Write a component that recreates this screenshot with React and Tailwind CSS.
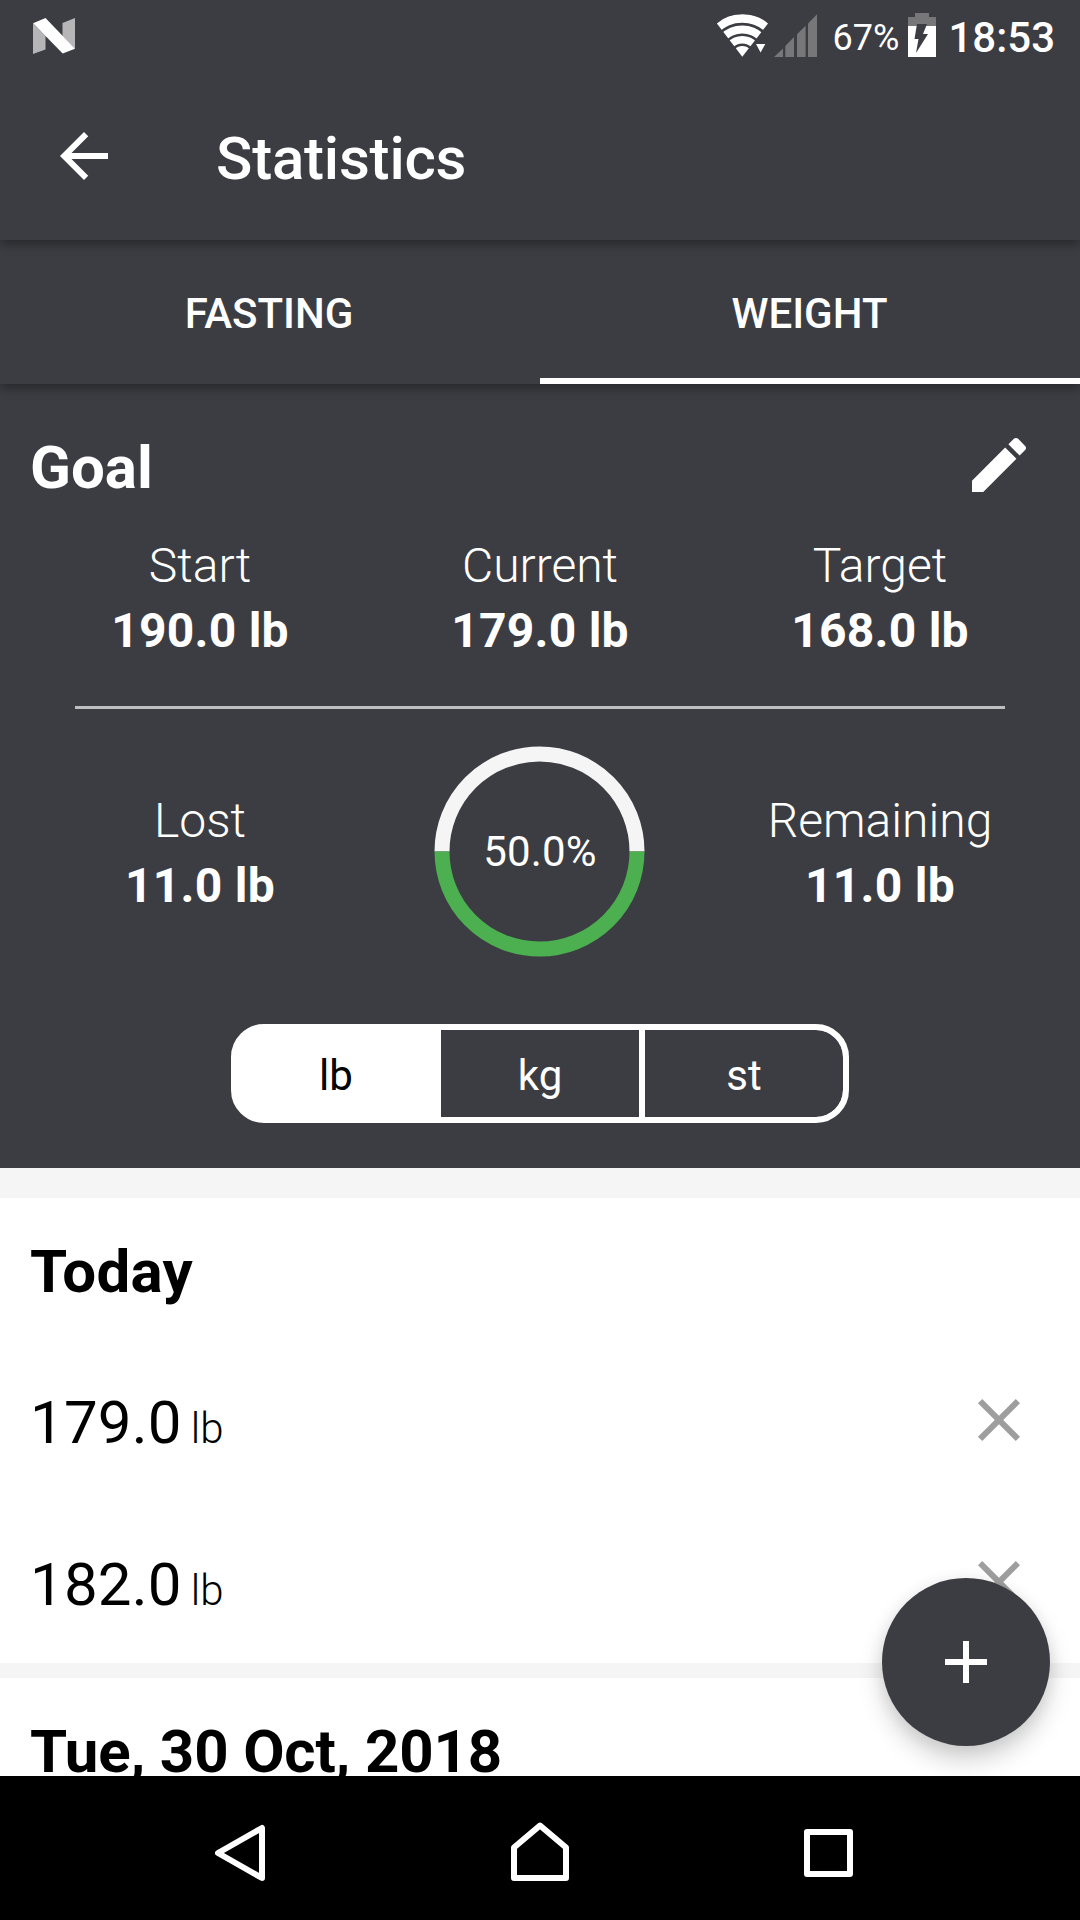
const ROBOTO = "font-['Roboto',sans-serif]";

function StatusBar() {
  return (
    <div className="flex h-[72px] items-start justify-between pl-[33px] pr-[25px] text-white">
      <svg className="mt-[18px] h-[36px] w-[42px]" viewBox="0 0 42 36">
        <path d="M0 5.5 12.5 18V31.5L0 36Z" fill="#b6b6b8" />
        <path d="M29.5 5 42 0V31L29.5 18Z" fill="#b6b6b8" />
        <path d="M0 5.3 12.5 0 42 30.7 29.7 35.6Z" fill="#fff" />
      </svg>
      <div className="flex items-start">
        <svg className="mt-[13px] h-[44px] w-[102px]" viewBox="716 13 102 44">
          <defs>
            <clipPath id="wifiFan">
              <path d="M742.3 56.7 716.9 23.5 Q727 14 742.3 14 Q758 14 768 23.5Z" />
            </clipPath>
          </defs>
          <g clipPath="url(#wifiFan)" fill="none" stroke="#fff">
            <circle cx="742.3" cy="56.7" r="38.3" strokeWidth="8.5" />
            <circle cx="742.3" cy="56.7" r="27.2" strokeWidth="8" />
            <circle cx="742.3" cy="56.7" r="17" strokeWidth="7.5" />
            <circle cx="742.3" cy="56.7" r="5.3" strokeWidth="10.6" />
          </g>
          <path d="M756 44H765.3L760.6 52.5Z" fill="#fff" />
          <g fill="#77777a">
            <path d="M774 57 783 48.5V57Z" />
            <path d="M785.3 57V46L794 37V57Z" />
            <path d="M797 57V34.3L805.6 25.7V57Z" />
            <path d="M808 57V23.4L817 14.3V57Z" />
          </g>
        </svg>
        <span className="ml-[15px] mt-[20px] text-[36px] leading-[36px]">67%</span>
        <svg className="ml-[9px] mt-[13px] h-[44px] w-[28px]" viewBox="0 0 28 44">
          <path d="M7 0H21V4H28V13H0V4H7Z" fill="#77777a" />
          <path d="M0 13H28V44H0Z" fill="#fff" />
          <path d="M9 11H19L15 21H20L8 40L10.5 26H6.5Z" fill="#3c3d42" />
        </svg>
        <span className="ml-[12px] mt-[17px] text-[42px] font-medium leading-[42px]">18:53</span>
      </div>
    </div>
  );
}

function AppBar() {
  return (
    <header className="relative z-20 bg-[#3c3d42] shadow-[0_4px_10px_rgba(0,0,0,0.35)]">
      <StatusBar />
      <div className="flex h-[168px] items-center gap-[96px] pl-[48px] text-white">
        <svg className="size-[72px]" viewBox="0 0 24 24" fill="currentColor">
          <path d="M20 11H7.83l5.59-5.59L12 4l-8 8 8 8 1.41-1.41L7.83 13H20v-2z" />
        </svg>
        <h1 className="pt-[5px] text-[60px] font-medium leading-[71px] tracking-[-0.2px]">Statistics</h1>
      </div>
    </header>
  );
}

function Tabs() {
  return (
    <nav className="relative z-10 grid h-[144px] grid-cols-2 bg-[#3c3d42] text-center text-[42px] font-medium leading-[50px] text-white shadow-[0_4px_10px_rgba(0,0,0,0.35)]">
      <div className="border-b-[6px] border-transparent pr-[2px] pt-[49px]">FASTING</div>
      <div className="border-b-[6px] border-white pr-px pt-[49px]">WEIGHT</div>
    </nav>
  );
}

function Stat({ label, value }) {
  return (
    <div className="text-center text-[48px] leading-[65px]">
      <div className="font-light">{label}</div>
      <div className="font-bold tracking-[0.25px]">{value}</div>
    </div>
  );
}

function ProgressRing() {
  return (
    <div className="grid size-[210px] place-items-center justify-self-center">
      <svg className="col-start-1 row-start-1 size-[210px] overflow-visible" viewBox="0.5 0.5 210 210" fill="none" strokeWidth="15">
        <path d="M7.5 105A97.5 97.5 0 0 1 202.5 105" stroke="#f5f5f5" />
        <path d="M7.5 105A97.5 97.5 0 0 0 202.5 105" stroke="#4caf50" />
      </svg>
      <span className="col-start-1 row-start-1 text-[42px] leading-[50px] tracking-[0.2px]">50.0%</span>
    </div>
  );
}

function GoalPanel() {
  return (
    <section className="h-[784px] bg-[#3c3d42] px-[30px] text-white">
      <div className="flex items-start justify-between pr-[15px] pt-[45px]">
        <h2 className="mt-[3px] text-[60px] font-bold leading-[71px]">Goal</h2>
        <svg className="size-[72px]" viewBox="0 0 24 24" fill="currentColor">
          <path d="M3 17.25V21h3.75L17.81 9.94l-3.75-3.75L3 17.25zM20.71 7.04c.39-.39.39-1.02 0-1.41l-2.34-2.34c-.39-.39-1.02-.39-1.41 0l-1.83 1.83 3.75 3.75 1.83-1.83z" />
        </svg>
      </div>
      <div className="mt-[30px] grid grid-cols-3">
        <Stat label="Start" value="190.0 lb" />
        <Stat label="Current" value="179.0 lb" />
        <Stat label="Target" value="168.0 lb" />
      </div>
      <div className="mx-[45px] mt-[43px] h-[3px] bg-[#bfbfbf]" />
      <div className="mt-[38px] grid grid-cols-3">
        <div className="pt-[41px]">
          <Stat label="Lost" value="11.0 lb" />
        </div>
        <ProgressRing />
        <div className="pt-[41px]">
          <Stat label="Remaining" value="11.0 lb" />
        </div>
      </div>
      <div className="mx-auto mt-[67px] flex h-[99px] w-[618px] gap-[6px] overflow-hidden rounded-[33px] border-[6px] border-white bg-white text-center text-[42px] leading-[91px]">
        <div className="flex-1 bg-white text-black">lb</div>
        <div className="flex-1 bg-[#3c3d42]">kg</div>
        <div className="flex-1 rounded-r-[27px] bg-[#3c3d42]">st</div>
      </div>
    </section>
  );
}

function Entry({ value }) {
  return (
    <div className="flex h-[162px] items-center justify-between pr-[15px]">
      <div className="mt-[5px] flex items-baseline gap-[9px]">
        <span className="text-[60px] leading-[71px] tracking-[0.2px]">{value}</span>
        <span className="text-[42px] font-light leading-[50px]">lb</span>
      </div>
      <svg className="size-[72px]" viewBox="0 0 24 24" fill="#9e9e9e">
        <path d="M19 6.41 17.59 5 12 10.59 6.41 5 5 6.41 10.59 12 5 17.59 6.41 19 12 13.41 17.59 19 19 17.59 13.41 12z" />
      </svg>
    </div>
  );
}

function History() {
  return (
    <main className="h-[608px] overflow-hidden bg-[#f5f5f5] pt-[30px] text-black">
      <section className="h-[465px] bg-white px-[30px]">
        <h2 className="h-[141px] pt-[38px] text-[60px] font-bold leading-[71px] tracking-[0.25px]">Today</h2>
        <Entry value="179.0" />
        <Entry value="182.0" />
      </section>
      <section className="mt-[15px] h-[300px] bg-white px-[30px]">
        <h2 className="pt-[38px] text-[60px] font-bold leading-[71px] tracking-[-0.16px]">Tue, 30 Oct, 2018</h2>
      </section>
    </main>
  );
}

function SystemNav() {
  return (
    <footer className="relative z-20 flex h-[144px] items-center justify-center bg-black">
      <svg className="h-[144px] w-[1080px]" viewBox="0 0 1080 144" fill="none" stroke="#fff" strokeWidth="6" strokeLinejoin="round">
        <path d="M262 52V102L218 77Z" />
        <path d="M540 49.5 514 71.5V102H566V71.5Z" />
        <path d="M807 56H850V98H807Z" />
      </svg>
    </footer>
  );
}

export default function App() {
  return (
    <div className={`relative h-[1920px] w-[1080px] overflow-hidden ${ROBOTO}`}>
      <AppBar />
      <Tabs />
      <GoalPanel />
      <History />
      <button className="absolute right-[30px] bottom-[174px] z-10 grid size-[168px] place-items-center rounded-full bg-[#3c3d42] shadow-[0_14px_24px_rgba(0,0,0,0.18),0_2px_16px_rgba(0,0,0,0.07)]" aria-label="Add">
        <svg className="size-[72px]" viewBox="0 0 24 24" fill="#fff">
          <path d="M19 13h-6v6h-2v-6H5v-2h6V5h2v6h6v2z" />
        </svg>
      </button>
      <SystemNav />
    </div>
  );
}
